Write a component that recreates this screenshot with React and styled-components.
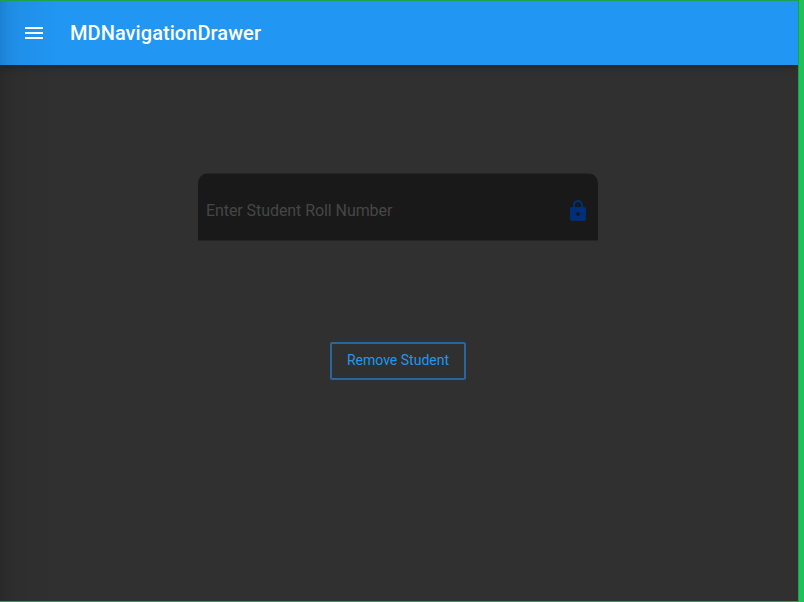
import React from "react";
import styled, { createGlobalStyle } from "styled-components";

const GlobalStyle = createGlobalStyle`
  html, body { margin: 0; padding: 0; }
  body { overflow: hidden; background: #1fc258; }
  *, *::before, *::after { box-sizing: border-box; }
`;

const Desktop = styled.div`
  width: 804px;
  height: 602px;
  display: flex;
  background: #1fc258;
  font-family: Roboto, "Liberation Sans", sans-serif;
`;

const AppWindow = styled.div`
  position: relative;
  width: 799px;
  height: 602px;
  display: flex;
  flex-direction: column;
  border: solid #21a04c;
  border-width: 1px 1px 1px 0;
  background: #303030;
  overflow: hidden;
`;

const DrawerShadow = styled.div`
  position: absolute;
  inset: 0 auto 0 0;
  width: 60px;
  pointer-events: none;
  background: linear-gradient(
    to right,
    rgba(0, 0, 0, 0.15) 0,
    rgba(0, 0, 0, 0.08) 8px,
    rgba(0, 0, 0, 0.045) 20px,
    rgba(0, 0, 0, 0.018) 40px,
    transparent 60px
  );
`;

const Toolbar = styled.header`
  height: 64px;
  flex: none;
  display: flex;
  align-items: center;
  gap: 24px;
  padding-left: 22px;
  background: #2196f3;
  box-shadow: 0 1px 8px rgba(0, 0, 0, 0.3);
`;

const MenuButton = styled.button`
  width: 24px;
  height: 24px;
  padding: 0;
  border: 0;
  background: none;
  color: #fff;
  svg { display: block; }
`;

const Title = styled.h1`
  margin: 0;
  color: #fff;
  font-size: 20px;
  font-weight: 500;
  line-height: 24px;
  letter-spacing: 0.06px;
`;

const Content = styled.main`
  flex: 1;
  display: flex;
  flex-direction: column;
  align-items: center;
  padding: 108px 2px 0 0;
`;

const Field = styled.label`
  width: 400px;
  height: 68px;
  display: flex;
  align-items: center;
  padding: 7px 8px 0;
  border-radius: 10px 10px 0 0;
  background: linear-gradient(
    #252525 1px,
    #191919 1px,
    #191919 67px,
    #252525 67px
  );
`;

const Input = styled.input`
  flex: 1;
  min-width: 0;
  padding: 0;
  border: 0;
  outline: 0;
  background: none;
  color: #fff;
  font: 400 16px/20px Roboto, "Liberation Sans", sans-serif;
  letter-spacing: -0.07px;
  &::placeholder { color: #464646; opacity: 1; }
`;

const LockIcon = styled.svg`
  width: 24px;
  height: 24px;
  flex: none;
  fill: #002f7a;
`;

const OutlineButton = styled.button`
  width: 136px;
  height: 38px;
  margin-top: 101px;
  padding: 0 0 2px;
  border: 2px solid #28669c;
  border-radius: 2px;
  background: none;
  color: #2196f3;
  font: 400 14px/20px Roboto, "Liberation Sans", sans-serif;
`;

export default function App() {
  return (
    <>
      <GlobalStyle />
      <Desktop>
        <AppWindow>
          <Toolbar>
            <MenuButton aria-label="Open navigation">
              <svg width="24" height="24" viewBox="0 0 24 24" fill="currentColor">
                <path d="M3 18h18v-2H3v2zm0-5h18v-2H3v2zm0-7v2h18V6H3z" />
              </svg>
            </MenuButton>
            <Title>MDNavigationDrawer</Title>
          </Toolbar>
          <Content>
            <Field>
              <Input placeholder="Enter Student Roll Number" />
              <LockIcon viewBox="0 0 24 24">
                <path d="M18 8h-1V6c0-2.76-2.24-5-5-5S7 3.24 7 6v2H6c-1.1 0-2 .9-2 2v10c0 1.1.9 2 2 2h12c1.1 0 2-.9 2-2V10c0-1.1-.9-2-2-2zm-6 9c-1.1 0-2-.9-2-2s.9-2 2-2 2 .9 2 2-.9 2-2 2zm3.1-9H8.9V6c0-1.71 1.39-3.1 3.1-3.1s3.1 1.39 3.1 3.1v2z" />
              </LockIcon>
            </Field>
            <OutlineButton>Remove Student</OutlineButton>
          </Content>
          <DrawerShadow />
        </AppWindow>
      </Desktop>
    </>
  );
}
